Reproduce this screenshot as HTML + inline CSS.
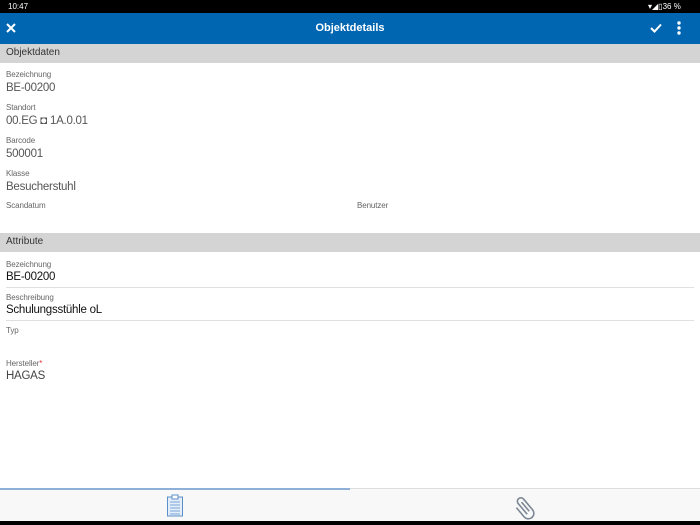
<!DOCTYPE html><html><head><style>
*{margin:0;padding:0;box-sizing:border-box}
body{width:700px;height:525px;position:relative;overflow:hidden;background:#fff;font-family:"Liberation Sans",sans-serif}
.a{position:absolute;white-space:nowrap}
.l{font-size:8px;color:#666;left:6px;letter-spacing:-0.1px}
.v{font-size:11.5px;color:#555;left:6px;letter-spacing:-0.25px}
.k{font-size:11.5px;color:#111;left:6px;letter-spacing:-0.25px}
.hr{position:absolute;left:6px;right:6px;height:1px;background:#e0e0e0}
</style></head><body>
<div class="a" style="left:0;top:0;width:700px;height:13px;background:#000"></div>
<div class="a" style="left:8px;top:2px;font-size:8px;color:#fff">10:47</div>
<div class="a" style="left:648px;top:2px;font-size:8px;color:#fff">▾◢▯36 %</div>
<div class="a" style="left:0;top:13px;width:700px;height:31px;background:#0166b2"></div>
<svg class="a" style="left:6px;top:23px" width="10" height="10"><path d="M1 1L9 9M9 1L1 9" stroke="#fff" stroke-width="2"/></svg>
<div class="a" style="left:0;width:700px;top:22px;text-align:center;color:#fff;font-size:11px;font-weight:bold">Objektdetails</div>
<svg class="a" style="left:650px;top:23px" width="12" height="10"><path d="M1 5L4.5 8.5L11 1.5" stroke="#fff" stroke-width="2" fill="none"/></svg>
<svg class="a" style="left:676px;top:21px" width="6" height="14"><circle cx="3" cy="2" r="1.7" fill="#fff"/><circle cx="3" cy="7" r="1.7" fill="#fff"/><circle cx="3" cy="12" r="1.7" fill="#fff"/></svg>
<div class="a" style="left:0;top:44px;width:700px;height:19px;background:#d4d4d4"></div>
<div class="a" style="left:6px;top:47px;font-size:10px;color:#333">Objektdaten</div>
<div class="a l" style="top:70px">Bezeichnung</div><div class="a v" style="top:82px">BE-00200</div>
<div class="a l" style="top:103px">Standort</div><div class="a v" style="top:115px">00.EG ◘ 1A.0.01</div>
<div class="a l" style="top:136px">Barcode</div><div class="a v" style="top:148px">500001</div>
<div class="a l" style="top:169px">Klasse</div><div class="a v" style="top:181px">Besucherstuhl</div>
<div class="a l" style="top:201px">Scandatum</div><div class="a l" style="top:201px;left:357px">Benutzer</div>
<div class="a" style="left:0;top:233px;width:700px;height:19px;background:#d4d4d4"></div>
<div class="a" style="left:6px;top:236px;font-size:10px;color:#333">Attribute</div>
<div class="a l" style="top:260px">Bezeichnung</div><div class="a k" style="top:271px">BE-00200</div>
<div class="hr" style="top:287px"></div>
<div class="a l" style="top:293px">Beschreibung</div><div class="a k" style="top:304px">Schulungsstühle oL</div>
<div class="hr" style="top:320px"></div>
<div class="a l" style="top:326px">Typ</div>
<div class="a l" style="top:359px">Hersteller<span style="color:#d33">*</span></div><div class="a v" style="top:370px;color:#444">HAGAS</div>
<div class="a" style="left:0;top:488px;width:700px;height:33px;background:#f8f8f8;border-top:1px solid #ddd"></div>
<div class="a" style="left:0;top:488px;width:350px;height:2px;background:#8fb0d6"></div>
<svg class="a" style="left:166px;top:494px" width="18" height="23"><rect x="1.5" y="3" width="15" height="19" fill="#e4eefa" stroke="#5b8fc9"/><rect x="6" y="1" width="6" height="4" fill="#fff" stroke="#5b8fc9"/><path d="M4 8h10M4 11h10M4 14h10M4 17h10M4 20h10" stroke="#7aa6d8" stroke-width="1"/></svg>
<svg class="a" style="left:513px;top:494px" width="24" height="26"><g transform="rotate(-40 12 13)"><path d="M9 20V6a3.5 3.5 0 0 1 7 0v14a5.5 5.5 0 0 1-11 0V8M12.5 7v12" stroke="#7b8794" stroke-width="1.6" fill="none"/></g></svg>
<div class="a" style="left:0;top:521px;width:700px;height:4px;background:#000"></div>
</body></html>
